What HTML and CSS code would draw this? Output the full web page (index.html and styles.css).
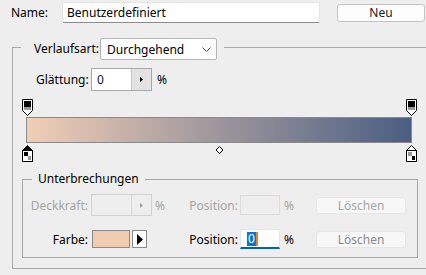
FILE: index.html
```html
<!DOCTYPE html>
<html lang="de">
<head>
  <meta charset="UTF-8" />
  <title>Verlaufs-Editor</title>
  <link rel="stylesheet" href="styles.css">
</head>
<body>
  <div class="top">
    <span class="name-label">Name:</span>
    <div class="name-input">Benutzerdefiniert</div>
    <button class="btn-new">Neu</button>
  </div>

  <fieldset class="group outer">
    <legend class="outer-legend">
      <span class="type-label">Verlaufsart:</span>
      <div class="select">Durchgehend
        <svg class="chev" width="9" height="5" viewBox="0 0 9 5"><path d="M0.5 0.5 L4.5 4.5 L8.5 0.5" fill="none" stroke="#555"/></svg>
      </div>
    </legend>

    <div class="smooth-row">
      <span class="smooth-label">Glättung:</span>
      <div class="spin">
        <span class="spin-val">0</span>
        <span class="spin-btn"><svg width="3" height="5" viewBox="0 0 3 5"><path d="M0 0 L3 2.5 L0 5 Z" fill="#000"/></svg></span>
      </div>
      <span class="pct">%</span>
    </div>

    <div class="editor">
      <div class="track top-track">
        <svg class="stop" style="left:0%" width="11" height="17" viewBox="0 0 11 17">
          <path d="M0.5 0.5 H10.5 V11.5 L5.5 16.5 L0.5 11.5 Z" fill="#fff" stroke="#000"/>
          <rect x="2" y="2" width="7" height="6" fill="#000"/>
          <rect x="2" y="8" width="7" height="3" fill="#9a9a9a"/>
        </svg>
        <svg class="stop" style="left:100%" width="11" height="17" viewBox="0 0 11 17">
          <path d="M0.5 0.5 H10.5 V11.5 L5.5 16.5 L0.5 11.5 Z" fill="#fff" stroke="#000"/>
          <rect x="2" y="2" width="7" height="6" fill="#000"/>
          <rect x="2" y="8" width="7" height="3" fill="#9a9a9a"/>
        </svg>
      </div>
      <div class="bar"></div>
      <div class="track bottom-track">
        <svg class="stop" style="left:0%" width="11" height="17" viewBox="0 0 11 17">
          <path d="M5.5 0.5 L10.5 5.5 V16.5 H0.5 V5.5 Z" fill="#000" stroke="#000"/>
          <rect x="1" y="6" width="9" height="10" fill="#fff"/>
          <rect x="2" y="7" width="4" height="4" fill="#000"/>
          <rect x="6" y="11" width="3" height="4" fill="#9a9a9a"/>
        </svg>
        <svg class="mid" style="left:50%" width="11" height="8" viewBox="0 0 11 8">
          <path d="M5.5 0.5 L9 4 L5.5 7.5 L2 4 Z" fill="#fff" stroke="#000"/>
        </svg>
        <svg class="stop" style="left:100%" width="11" height="17" viewBox="0 0 11 17">
          <path d="M5.5 0.5 L10.5 5.5 V16.5 H0.5 V5.5 Z" fill="#fff" stroke="#000"/>
          <path d="M0.5 5.5 H10.5" stroke="#000"/>
          <rect x="2" y="7" width="4" height="4" fill="#9a9a9a"/>
          <rect x="6" y="11" width="3" height="4" fill="#000"/>
        </svg>
      </div>
    </div>

    <fieldset class="group inner">
      <legend class="inner-legend">Unterbrechungen</legend>

      <div class="stop-row disabled">
        <span class="row-label">Deckkraft:</span>
        <div class="spin small">
          <span class="spin-val"></span>
          <span class="spin-btn"><svg width="3" height="5" viewBox="0 0 3 5"><path d="M0 0 L3 2.5 L0 5 Z" fill="#a0a0a0"/></svg></span>
        </div>
        <span class="pct-a">%</span>
        <span class="pos-label">Position:</span>
        <div class="pos-input"></div>
        <span class="pct-b">%</span>
        <button class="btn-del">Löschen</button>
      </div>

      <div class="stop-row">
        <span class="row-label">Farbe:</span>
        <div class="swatch"></div>
        <button class="swatch-btn"><svg width="6" height="11" viewBox="0 0 6 11"><path d="M0 0 L6 5.5 L0 11 Z" fill="#000"/></svg></button>
        <span class="pct-a gap"></span>
        <span class="pos-label">Position:</span>
        <div class="pos-input focus"><span class="sel">0</span><span class="caret"></span></div>
        <span class="pct-b">%</span>
        <button class="btn-del">Löschen</button>
      </div>
    </fieldset>
  </fieldset>
</body>
</html>
```

FILE: styles.css
```css
body { margin: 0; background: #eeeeee; font-family: "Noto Sans", "Open Sans", sans-serif; font-size: 12px; color: #000; overflow: hidden; }
button { font-family: inherit; font-size: 12px; padding: 0; }

.top { display: flex; align-items: center; height: 25px; padding-left: 11px; }
.name-label { width: 51px; }
.name-input { box-sizing: border-box; width: 258px; height: 21px; line-height: 19px; padding-left: 4px; background: #fff; border: 1px solid #e4e4e4; border-bottom-color: #8c8c8c; border-radius: 2px; }
.btn-new { box-sizing: border-box; margin-left: 17px; width: 88px; height: 18px; line-height: 16px; background: #fdfdfd; border: 1px solid #c4c4c4; border-radius: 3px; color: #1a1a1a; }

.group { border: 1px solid #a8a8a8; padding: 0; }
.outer { margin: 13px -20px 0 12px; padding-bottom: 10px; }
.outer-legend { display: flex; align-items: flex-start; height: 18px; margin-left: 8px; padding: 0 7px 0 13px; }
.type-label { width: 66px; line-height: 22px; }
.select { box-sizing: border-box; display: flex; align-items: center; justify-content: space-between; width: 117px; height: 22px; padding: 0 5px 0 6px; background: #fff; border: 1px solid #b5b5b5; border-radius: 2px; }

.smooth-row { display: flex; align-items: center; margin-top: 12px; padding-left: 23px; }
.smooth-label { width: 55px; }
.spin { box-sizing: border-box; display: flex; width: 61px; height: 23px; background: #fff; border: 1px solid #a8a8a8; }
.spin-val { flex: 1; line-height: 21px; padding-left: 5px; color: #101040; }
.spin-btn { display: flex; align-items: center; justify-content: center; width: 19px; background: #e3e3e3; border-left: 1px solid #c8c8c8; }
.pct { margin-left: 5px; }

.editor { position: relative; margin: 8px 0 0 9px; width: 396px; }
.track { position: relative; width: 384px; height: 18px; }
.bottom-track { height: 19px; }
.stop { position: absolute; top: 0; display: block; }
.bottom-track .stop { top: 2px; }
.mid { position: absolute; top: 3px; display: block; }
.bar { box-sizing: border-box; margin-left: 4px; width: 386px; height: 26px; border: 1px solid #8a8a8a; background: linear-gradient(to right, #f0ceb6, #4a5e82); }

.inner { margin: 9px 0 0 9px; width: 396px; box-sizing: border-box; padding-bottom: 7px; }
.inner-legend { margin-left: 9px; padding: 0 6px; line-height: 16px; }

.stop-row { display: flex; align-items: center; height: 22px; margin-top: 7px; }
.stop-row + .stop-row { margin-top: 12px; }
.row-label { width: 65px; margin-right: 3px; text-align: right; }
.spin.small { height: 22px; }
.disabled { color: #a6a6a6; }
.disabled .spin { background: transparent; border-color: #d2d2d2; }
.disabled .spin-btn { background: transparent; border-left-color: #d6d6d6; }
.pct-a { width: 33px; padding-left: 3px; }
.pct-a.gap { width: 41px; padding: 0; }
.pos-label { width: 50px; text-align: right; margin-right: 2px; }
.pos-input { box-sizing: border-box; display: flex; align-items: center; width: 40px; height: 20px; padding-left: 6px; border: 1px solid #dcdcdc; }
.pos-input.focus { background: #fff; border-color: #e6e6e6; border-bottom: 2px solid #005fb8; }
.sel { background: #0078d7; color: #fff; line-height: 14px; padding: 0 1px; }
.caret { width: 2px; height: 14px; background: #e8861a; }
.pct-b { width: 32px; margin-left: 4px; }
.btn-del { box-sizing: border-box; width: 90px; height: 17px; line-height: 15px; background: #f7f7f7; border: 1px solid #e6e6e6; border-radius: 3px; color: #8a8a8a; }
.disabled .btn-del { color: #a6a6a6; }

.swatch { box-sizing: border-box; width: 38px; height: 18px; margin-left: 1px; background: #f0cdb1; border: 1px solid #8a8a8a; }
.swatch-btn { box-sizing: border-box; display: flex; align-items: center; justify-content: center; width: 15px; height: 18px; margin-left: 2px; background: #fff; border: 1px solid #8a8a8a; }
```
